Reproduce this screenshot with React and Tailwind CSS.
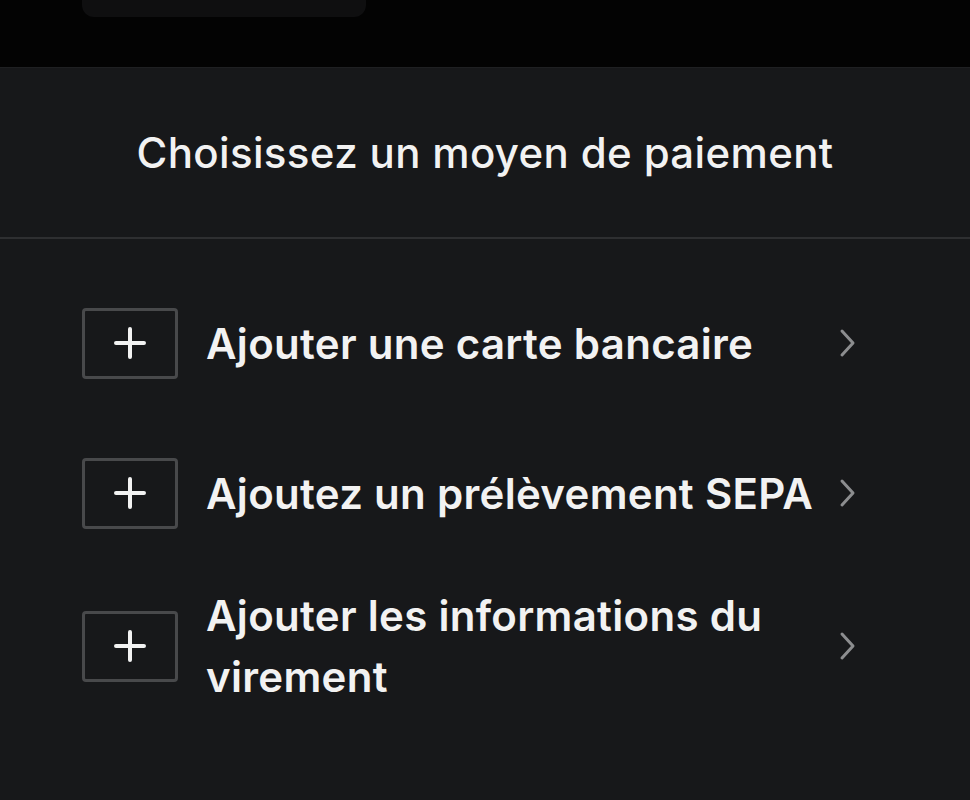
import React from "react";

const methods = [
  { label: "Ajouter une carte bancaire" },
  { label: "Ajoutez un prélèvement SEPA" },
  { label: "Ajouter les informations du virement" },
];

const PlusBox = () => (
  <div className="flex h-[71px] w-[96px] shrink-0 items-center justify-center rounded-[4px] border-[3px] border-[#48494b]">
    <svg width="32" height="32" viewBox="0 0 32 32" fill="none">
      <path
        d="M16 2v28M2 16h28"
        stroke="#f2f2f2"
        strokeWidth="4"
        strokeLinecap="round"
      />
    </svg>
  </div>
);

const Chevron = () => (
  <svg width="20" height="30" viewBox="0 0 20 30" fill="none" className="shrink-0">
    <path
      d="M4 3l11 12-11 12"
      stroke="#8c8d8f"
      strokeWidth="3"
      strokeLinecap="round"
      strokeLinejoin="round"
    />
  </svg>
);

export default function App() {
  return (
    <div
      className="flex h-[800px] w-[970px] flex-col overflow-hidden bg-[#030303]"
      style={{ fontFamily: "Inter, 'Noto Sans', sans-serif" }}
    >
      <div className="h-[67px] shrink-0">
        <div className="ml-[82px] h-[17px] w-[284px] rounded-b-[12px] bg-[#0f0f10]" />
      </div>

      <div className="flex flex-1 flex-col border-t border-[#1f2022] bg-[#17181a]">
        <div className="flex h-[169px] items-center justify-center">
          <h1 className="text-[42px] font-medium tracking-[0.35px] text-[#f2f2f2]">
            Choisissez un moyen de paiement
          </h1>
        </div>
        <div className="h-[2px] bg-[#2e2f31]" />

        <ul className="flex flex-col pt-[29px] pl-[82px] pr-[112px]">
          {methods.map((m, i) => (
            <li
              key={i}
              className={
                "flex min-h-[150px] items-center " + (i === 2 ? "pt-[6px]" : "")
              }
            >
              <PlusBox />
              <span className="ml-[28px] flex-1 pr-[8px] text-[42px] font-semibold leading-[61px] tracking-[0.3px] text-[#f2f2f2]">
                {m.label}
              </span>
              <Chevron />
            </li>
          ))}
        </ul>
      </div>
    </div>
  );
}
